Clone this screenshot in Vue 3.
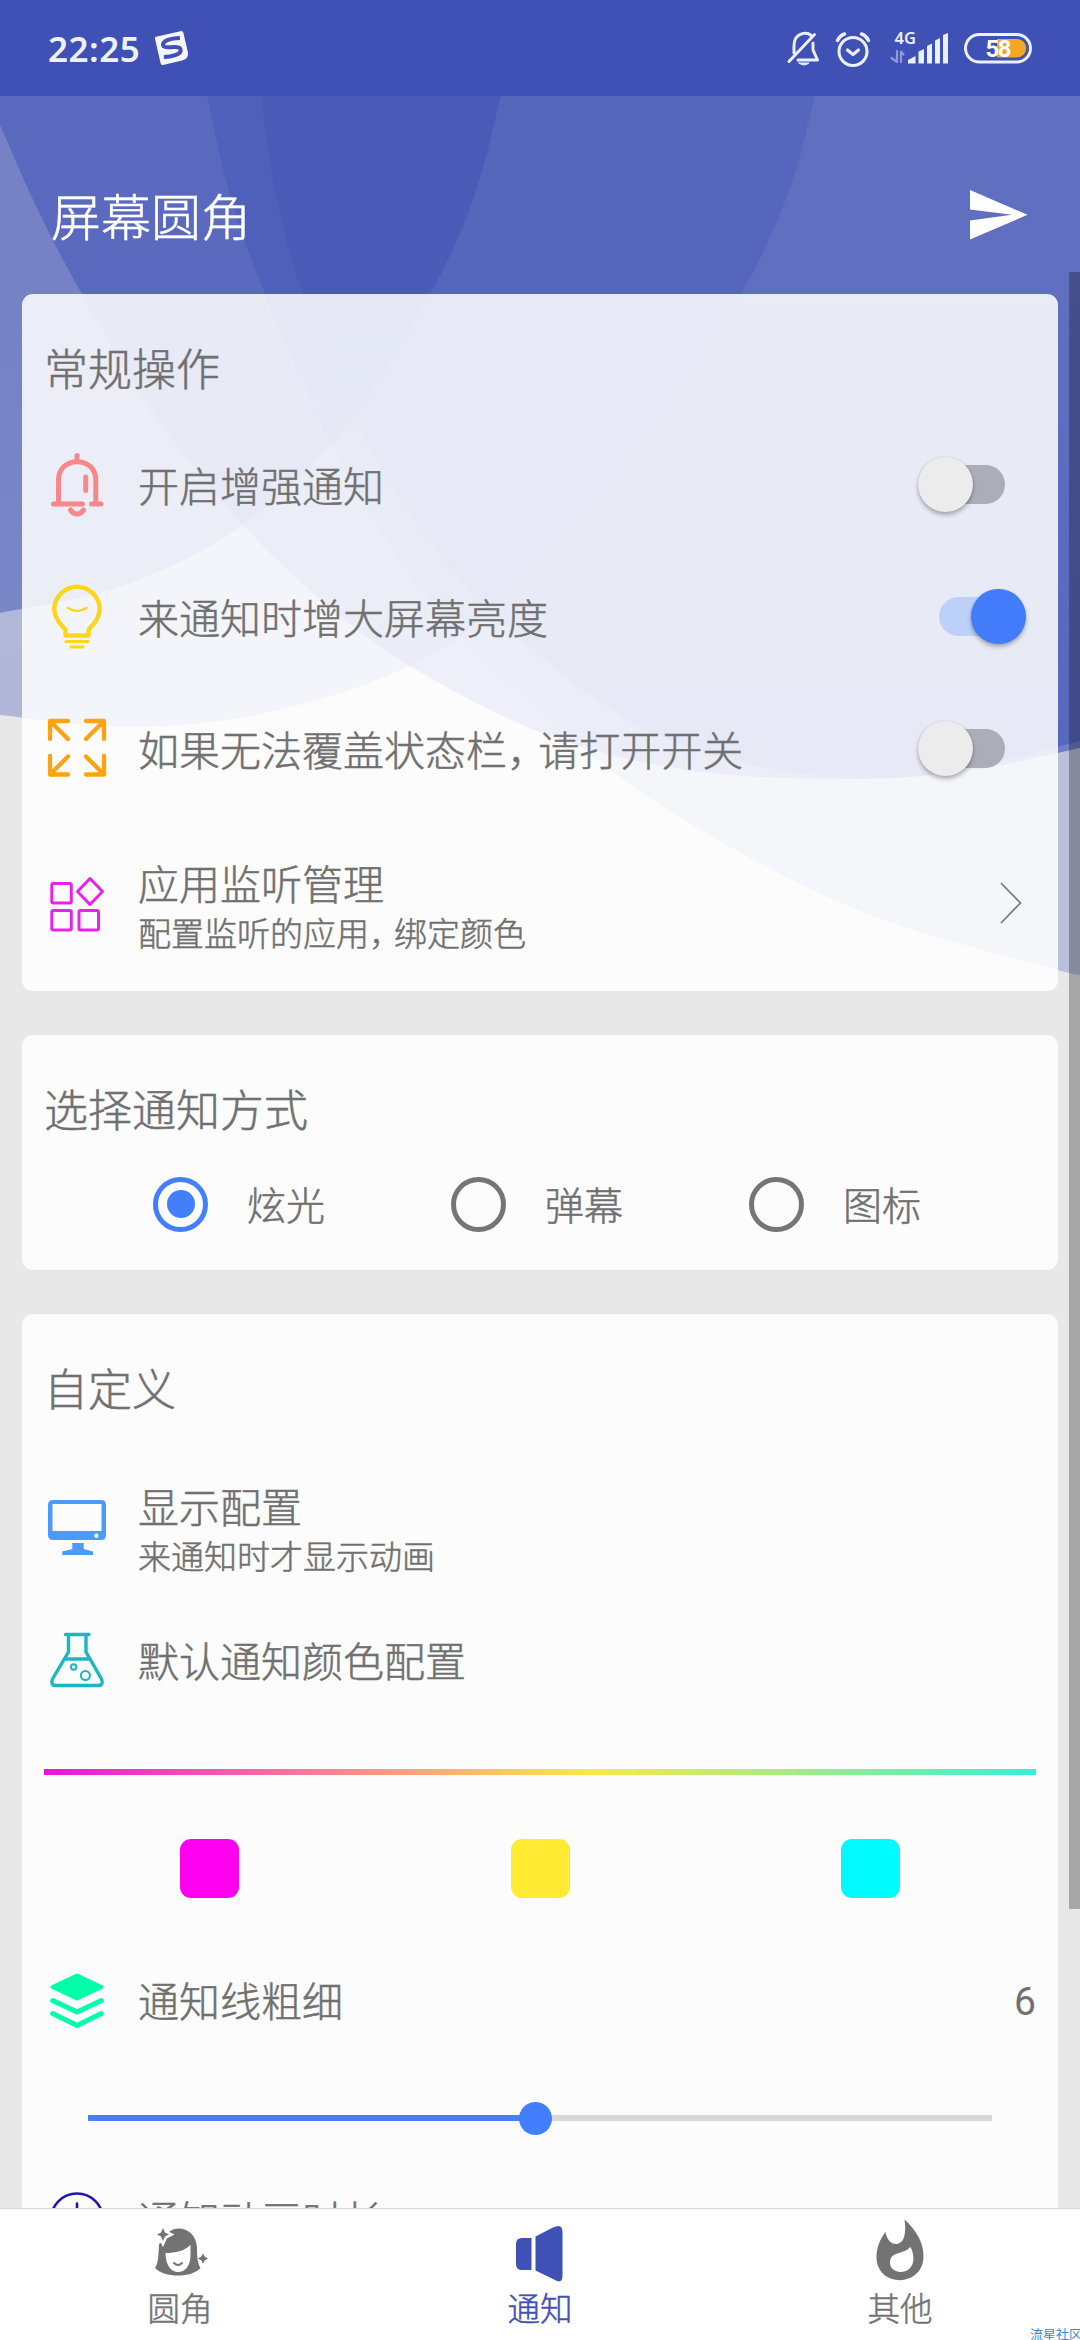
<script setup>
import { ref } from 'vue'

// Builds a smooth curve through the given points, then closes it along the straight corners.
function blob(points, corners) {
  let d = `M${points[0][0]} ${points[0][1]}`
  for (let i = 0; i < points.length - 1; i++) {
    const a = points[i - 1] || points[i]
    const b = points[i]
    const c = points[i + 1]
    const e = points[i + 2] || c
    d += `C${b[0] + (c[0] - a[0]) / 6} ${b[1] + (c[1] - a[1]) / 6} ${c[0] - (e[0] - b[0]) / 6} ${c[1] - (e[1] - b[1]) / 6} ${c[0]} ${c[1]}`
  }
  return d + corners.map(p => `L${p[0]} ${p[1]}`).join('') + 'Z'
}

const waves = [
  { fill: 'url(#w2)', d: blob([[815, 96], [790, 188], [741, 294], [640, 452], [500, 602], [410, 666], [270, 712], [131, 727], [0, 715]], [[0, 96]]) },
  { fill: 'url(#w1)', d: blob([[501, 96], [473, 200], [427, 300], [345, 428], [243, 525], [125, 585], [0, 613]], [[0, 96]]) },
  { fill: 'url(#w3)', d: blob([[0, 125], [38, 210], [82, 294], [157, 418], [243, 525], [326, 604], [410, 666], [540, 732], [680, 769], [833, 779], [960, 772], [1080, 748]], [[1080, 96], [0, 96]]) },
  { fill: 'url(#w4)', d: blob([[207, 96], [230, 195], [265, 294], [325, 430], [400, 560], [475, 649], [609, 769], [747, 856], [884, 920], [1058, 970], [1080, 974]], [[1080, 96]]) },
  { fill: 'url(#w5)', d: blob([[261, 96], [277, 200], [303, 294], [365, 440], [470, 590], [600, 702], [700, 751], [833, 777], [950, 772], [1080, 741]], [[1080, 96]]) },
]

const modes = ['炫光', '弹幕', '图标']
const mode = ref('炫光')
const swatches = ['#ff00f0', '#ffeb34', '#00faff']
const toggles = ref([
  { id: 'bell', label: '开启增强通知', on: false },
  { id: 'bulb', label: '来通知时增大屏幕亮度', on: true },
  { id: 'expand', label: '如果无法覆盖状态栏', tail: '请打开开关', on: false },
])
const thickness = ref(6)
const percent = 49.5
</script>

<template>
  <div class="app">
    <svg class="waves" width="1080" height="2340" viewBox="0 0 1080 2340">
      <defs>
        <linearGradient v-for="(g, i) in [[.54, .46], [.3, .33], [.5, .6], [.42, .27], [.33, .5]]" :id="'w' + (i + 1)" :key="i" gradientUnits="userSpaceOnUse" x1="0" y1="96" x2="0" y2="760">
          <stop offset="0" stop-color="#3f51b5" :stop-opacity="g[0]" />
          <stop offset="0.300" stop-color="#3f51b5" :stop-opacity="g[0]" />
          <stop offset="1" stop-color="#3f51b5" :stop-opacity="g[1]" />
        </linearGradient>
      </defs>
      <path v-for="w in waves" :key="w.fill" :d="w.d" :fill="w.fill" />
    </svg>

    <div class="status">
      <span class="time">22:25</span>
      <svg class="logo" width="34" height="34" viewBox="0 0 34 34">
        <g transform="rotate(-13 17 17)">
          <path d="M4 2.500H29Q31.500 2.500 31.500 5V24Q31.500 31.500 24 31.500H4.500Q2.500 31.500 2.500 29.500V4.500Q2.500 2.500 4 2.500Z" fill="#f5f6ff" />
          <path d="M27 9C17 7 9 8 9 12.500C9 17 25 15 25 20.500C25 25.500 14 25.500 7 24" fill="none" stroke="#3f51b5" stroke-width="4" />
        </g>
      </svg>
      <span class="grow"></span>
      <svg class="tray" width="246" height="60" viewBox="786 18 246 60" fill="none" stroke="#eaf0ff" stroke-width="3" stroke-linecap="round" stroke-linejoin="round">
        <path d="M794 53V46C794 31 810 31 812 37M813 43V50L817.500 60H798M789 61.500L814.500 34.500" />
        <path d="M799 63H809Q804 67 799 63Z" fill="#eaf0ff" stroke-width="1" />
        <circle cx="853" cy="51.500" r="14" />
        <path d="M847.500 50L853 54.500L858.500 50" stroke-width="3.200" />
        <path d="M837.500 40.500Q840 35.500 844.500 34M868.500 40.500Q866 35.500 861.500 34" stroke-width="3.500" />
        <text x="894.500" y="43.500" class="net">4G</text>
        <g stroke="none" fill="#eaf0ff">
          <path d="M908 63V60L915.500 56V63.500H908ZM918.500 63.500V51.500L924 49V63.500ZM927 63.500V46L932 43.500V63.500ZM935 63.500V40.500L940 38V63.500ZM943 63.500V35L948 33V63.500Z" />
        </g>
        <path d="M897 51V62L891.500 58M901 62V51.500L903.500 54.500" stroke="#8f9bd8" stroke-width="2.200" />
        <rect x="965.500" y="34.500" width="65" height="27.500" rx="13.750" />
        <path d="M997 39H1017A9 9 0 0 1 1017 57.500H997Z" fill="#f5a623" stroke="none" />
        <text x="985.500" y="57.300" class="batt">58</text>
      </svg>
    </div>

    <header class="header">
      <h1>屏幕圆角</h1>
      <svg width="58" height="50" viewBox="0 0 58 50"><path d="M0 0L57.500 24.800L0 49.500V30.500L42 24.800L0 19.500Z" fill="#fff" /></svg>
    </header>

    <main class="content">
      <section class="card">
        <h2>常规操作</h2>
        <div v-for="t in toggles" :key="t.id" class="row">
          <svg class="icon" width="66" height="76" viewBox="0 0 66 76" fill="none" stroke-linecap="round" stroke-linejoin="round">
            <g v-if="t.id === 'bell'" stroke="#f8868a" stroke-width="5">
              <path d="M33 9.500V15M14.500 58V34C14.500 9.500 51.800 9.500 51.800 34V58M9.500 58H38.500M47.500 58H57M41.700 31V44.500M26.500 64C30 69.300 36 69.300 39.500 64" />
            </g>
            <g v-else-if="t.id === 'bulb'" stroke="#fad71b" stroke-width="4.500">
              <path d="M21.500 57.500V52.500C21 49 10.200 44 10.200 30A22.900 23.500 0 0 1 55.800 30C55.800 44 45 49 44.500 52.500V57.500Z" />
              <path d="M22 63.500H44M27 69H39" stroke-width="3.200" />
              <path d="M24 30Q33 36 42.500 30" stroke-width="2.500" />
            </g>
            <g v-else stroke="#fda213" stroke-width="4.300">
              <path d="M6 29V11H24M7 12L24 29M60 29V11H42M59 12L42 29M6 46V64.500H24M7 63.500L24 46.500M60 46V64.500H42M59 63.500L42 46.500" />
            </g>
          </svg>
          <span class="label">{{ t.label }}<template v-if="t.tail"><span class="comma">，</span>{{ t.tail }}</template></span>
          <span class="switch" :class="{ on: t.on }" @click="t.on = !t.on"><i></i></span>
        </div>
        <div class="row tall">
          <svg class="icon" width="66" height="76" viewBox="0 0 66 76" fill="none" stroke="#e822e6" stroke-width="3" stroke-linejoin="round">
            <rect x="7.800" y="17.500" width="19.500" height="19.500" rx="1.500" /><rect x="7.800" y="44.500" width="19.500" height="19.500" rx="1.500" /><rect x="35" y="44.500" width="19.500" height="19.500" rx="1.500" />
            <path d="M46 12.500L58.500 25.500L46 38.500L33.500 25.500Z" />
          </svg>
          <div class="texts"><span class="label">应用监听管理</span><span class="sub">配置监听的应用<span class="comma">，</span>绑定颜色</span></div>
          <svg class="chev" width="22" height="42" viewBox="0 0 22 42"><path d="M1 1L20.500 21L1 41" fill="none" stroke="#777" stroke-width="1.700" /></svg>
        </div>
      </section>

      <section class="card">
        <h2>选择通知方式</h2>
        <div class="modes">
          <label v-for="m in modes" :key="m" @click="mode = m"><i class="radio" :class="{ on: mode === m }"></i><span>{{ m }}</span></label>
        </div>
      </section>

      <section class="card last">
        <h2>自定义</h2>
        <div class="row display">
          <svg class="icon" width="66" height="76" viewBox="0 0 66 76" fill="#4a9bfb">
            <path fill-rule="evenodd" d="M9 11H57Q62 11 62 16V46Q62 51 57 51H9Q4 51 4 46V16Q4 11 9 11ZM8.500 15V42H57.500V15ZM52.400 44.500A2.200 2.200 0 1 0 52.400 48.900A2.200 2.200 0 1 0 52.400 44.500Z" />
            <path d="M28.300 54H39.700V60L49 62.500V66H18.300V62.500L28.300 60Z" />
          </svg>
          <div class="texts"><span class="label">显示配置</span><span class="sub">来通知时才显示动画</span></div>
        </div>
        <div class="row short">
          <svg class="icon" width="66" height="76" viewBox="0 0 66 76" fill="none" stroke="#1ab6c4" stroke-width="3.400" stroke-linecap="round" stroke-linejoin="round">
            <path d="M21.500 12.500H45M24.500 13V30L8.500 57Q6 63.500 12 63.500H54Q60 63.500 57.500 57L42 30V13M20.500 37H46" />
            <circle cx="29.700" cy="45" r="2.700" stroke-width="2" /><circle cx="41.400" cy="53.500" r="4.500" stroke-width="2" />
          </svg>
          <span class="label">默认通知颜色配置</span>
        </div>
        <div class="rainbow"></div>
        <div class="swatches"><span v-for="c in swatches" :key="c"><i :style="{ background: c }"></i></span></div>
        <div class="row width">
          <svg class="icon" width="66" height="76" viewBox="0 0 66 76" fill="none" stroke="#00ffa9" stroke-width="5" stroke-linecap="round" stroke-linejoin="round">
            <path d="M33 13.500L57.500 25L33 36.500L8.500 25Z" fill="#00ffa9" stroke-width="4" />
            <path d="M8.700 38.500L33 50L57.300 38.500M8.700 51.500L33 63.500L57.300 51.500" />
          </svg>
          <span class="label">通知线粗细</span><span class="value">{{ thickness }}</span>
        </div>
        <div class="slider"><div class="track"><div class="fill" :style="{ width: percent + '%' }"><i></i></div></div></div>
        <div class="row">
          <svg class="icon" width="66" height="76" viewBox="0 0 66 76" fill="none" stroke="#2114b8" stroke-width="2.600" stroke-linecap="round">
            <circle cx="33" cy="39.500" r="26" /><path d="M33 23.500V40H45" />
          </svg>
          <span class="label">通知动画时长</span><span class="value">3s</span>
        </div>
      </section>
    </main>

    <nav class="nav">
      <a>
        <svg width="60" height="60" viewBox="0 0 60 60" fill="#737373">
          <path fill-rule="evenodd" d="M14 20C17 2 46 3 47 27C47 38 48 43 50.500 47C42 57 14 57 5 47C8 43 8.500 36 9 23ZM15.500 32C15.500 44 21 51 28 51C35 51 40.500 45 40.500 34V24C34 30 26 32 15.500 32Z" />
          <path d="M13 7L15 11.500L19 13.500L15 15.500L13 20L11 15.500L7 13.500L11 11.500Z" stroke="#fff" stroke-width="5" paint-order="stroke" />
          <path d="M53 33L54.500 36L57.500 37.500L54.500 39L53 42L51.500 39L48.500 37.500L51.500 36Z" stroke="#737373" stroke-width="0.800" />
          <path d="M24 42Q28 46 32 42" fill="none" stroke="#737373" stroke-width="2" stroke-linecap="round" />
        </svg>圆角
      </a>
      <a class="active">
        <svg width="60" height="60" viewBox="0 0 60 60" fill="#3f51b5">
          <path d="M12 17H21.500V49H12Q6 49 6 43V23Q6 17 12 17ZM25.500 15.500L43 6.500Q52.500 2 52.500 11V55Q52.500 64 43 58L25.500 49.500Z" />
        </svg>通知
      </a>
      <a>
        <svg width="60" height="60" viewBox="0 0 60 60" fill="#737373">
          <path fill-rule="evenodd" d="M34.500 -1.500C46 9 53.500 21 53.500 35C53.500 67 6.500 67 6.500 36C6.500 27 10 18 15.500 11C17 19 21 23 26 23C32 23 37 17 34.500 -1.500ZM40.500 26C33 34 20 30 20 42C20 54 43 55 43.500 38C43.500 33 42 29 40.500 26Z" />
        </svg>其他
      </a>
    </nav>
    <div class="scrollbar"></div>
    <div class="mark">流星社区</div>
  </div>
</template>

<style>
body { margin: 0; }
</style>
<style scoped>
.app { position: relative; width: 1080px; height: 2340px; overflow: hidden; display: flex; flex-direction: column; background: #e8e8e8; color: #707070; font-family: "Noto Sans CJK SC", "Noto Sans", sans-serif; font-weight: 300; -webkit-text-stroke: .5px currentColor; }
.waves { position: absolute; top: 0; left: 0; }
.status { position: relative; height: 96px; flex: none; box-sizing: border-box; padding: 0 48px; display: flex; align-items: center; background: #3f51b5; -webkit-text-stroke: 0; }
.time { font: 600 35px "Noto Sans", sans-serif; letter-spacing: .5px; color: #eef1ff; }
.logo { margin-left: 15px; }
.grow { flex: 1; }
.net { font: 600 16.500px "Noto Sans", sans-serif; fill: #eaf0ff; stroke: none; }
.batt { font: 700 24px Roboto, "Noto Sans", sans-serif; letter-spacing: -1.500px; fill: #fff; stroke: none; }
.header { position: relative; height: 198px; flex: none; box-sizing: border-box; padding: 0 52px 0 51px; display: flex; align-items: center; justify-content: space-between; color: #fff; }
.header h1 { margin: 37px 0 0; font-size: 50px; font-weight: 300; line-height: 60px; }
.header svg { margin: 39px 0 0; }
.content { position: relative; flex: 1; min-height: 0; overflow: hidden; padding: 0 22px; display: flex; flex-direction: column; gap: 44px; }
.card { flex: none; box-sizing: border-box; height: 697px; background: rgba(255, 255, 255, .86); border-radius: 11px; padding: 0 22px; }
.card:nth-child(2) { height: 235px; }
.card.last { height: 1040px; }
h2 { margin: 0; height: 127px; box-sizing: border-box; padding-top: 22px; line-height: 103px; font-size: 44px; font-weight: 300; }
.row { height: 132px; display: flex; align-items: center; }
.row.tall { height: 174px; }
.row.display { height: 172px; }
.row.short { height: 94px; }
.row.width { margin-top: 36px; }
.icon { flex: none; margin: -6px 28px 0 0; }
.tall .icon, .display .icon, .short .icon, .width .icon { margin-top: -1px; }
.label { font-size: 41px; line-height: 50px; white-space: nowrap; margin-top: -6px; }
.short .label, .width .label { margin-top: -3px; }
.comma { letter-spacing: -.24em; }
.texts { display: flex; flex-direction: column; padding-top: 5px; }
.texts .label { margin-top: 0; }
.sub { font-size: 33px; line-height: 50px; }
.value { margin: 4px 0 0 auto; font: 400 39px Roboto, sans-serif; -webkit-text-stroke: 0; }
.switch { position: relative; width: 66px; height: 39px; border-radius: 20px; margin: -6px 31px 0 auto; background: #abaeb7; }
.switch i { position: absolute; left: -21px; top: -8px; width: 55px; height: 55px; border-radius: 50%; background: #ececec; box-shadow: 0 3px 4px rgba(0, 0, 0, .28), 0 0 2px rgba(0, 0, 0, .12); }
.switch.on { background: #bdd0f8; }
.switch.on i { left: 32px; background: #427cfb; }
.chev { margin: -2px 14px 0 auto; }
.modes { height: 84px; display: flex; padding-left: 109px; }
.modes label { flex: none; width: 298px; display: flex; align-items: center; font-size: 39px; }
.modes label span { margin-top: -3px; }
.modes label:last-child { width: auto; }
.radio { width: 55px; height: 55px; box-sizing: border-box; border: 5.500px solid #757575; border-radius: 50%; margin-right: 39px; display: flex; align-items: center; justify-content: center; }
.radio.on { border-color: #447ffb; }
.radio.on::after { content: ""; width: 28px; height: 28px; border-radius: 50%; background: #447ffb; }
.rainbow { height: 6px; margin-top: 62px; background: linear-gradient(90deg, #e815dc, #f88790 30%, #fce74a 55%, #90ec92 80%, #36efd8); }
.swatches { margin-top: 64px; display: flex; height: 59px; }
.swatches span { flex: 1; display: flex; justify-content: center; }
.swatches i { width: 59px; height: 59px; border-radius: 11px; }
.slider { height: 89px; box-sizing: border-box; padding: 15px 44px 0; display: flex; align-items: center; }
.track { flex: 1; height: 6px; background: #d7d7d7; }
.fill { height: 6px; background: #4a80ee; display: flex; justify-content: flex-end; align-items: center; }
.fill i { flex: none; width: 33px; height: 33px; border-radius: 50%; background: #427fff; margin-right: -17px; }
.nav { position: relative; flex: none; height: 132px; box-sizing: border-box; border-top: 1px solid #d8d8d8; background: #fff; display: flex; padding-top: 12px; }
.nav a { flex: 1; display: flex; flex-direction: column; align-items: center; font-size: 32.500px; line-height: 50px; color: #737373; }
.nav svg { margin-bottom: 1px; overflow: visible; }
.nav .active { color: #3f51b5; }
.scrollbar { position: absolute; right: 0; top: 272px; width: 11px; height: 1637px; background: rgba(0, 0, 0, .28); }
.mark { position: absolute; left: 1030px; top: 2325px; font-size: 13px; line-height: 18px; font-weight: 400; color: #3f86d2; white-space: nowrap; -webkit-text-stroke: 0; }
</style>
